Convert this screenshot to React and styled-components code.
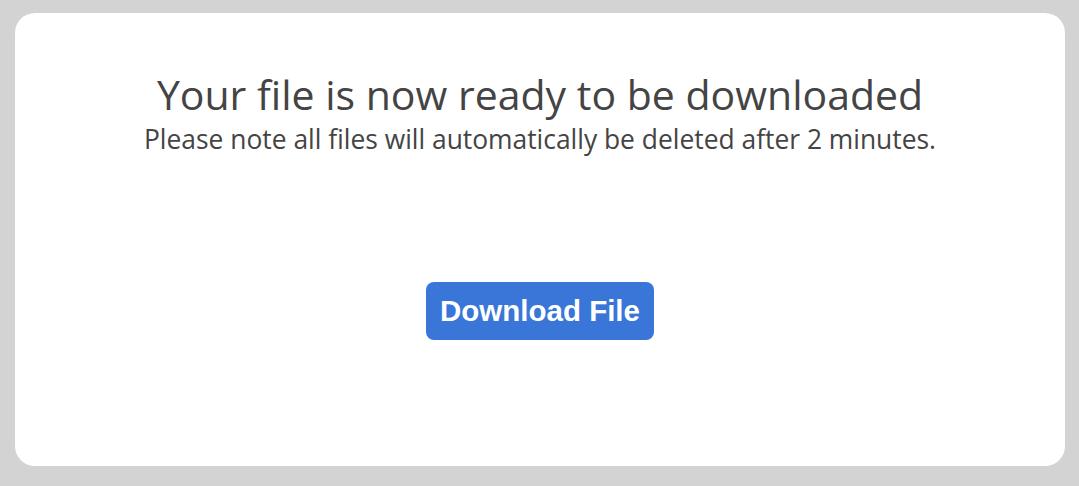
import styled, { createGlobalStyle } from 'styled-components';

const GlobalStyle = createGlobalStyle`
  html, body {
    margin: 0;
    padding: 0;
    background: #d3d3d3;
  }
`;

const Page = styled.div`
  box-sizing: border-box;
  width: 1079px;
  height: 486px;
  padding: 13px 14px 20px 15px;
  background: #d3d3d3;
`;

const Card = styled.main`
  box-sizing: border-box;
  height: 100%;
  background: #fff;
  border-radius: 20px;
  display: flex;
  flex-direction: column;
  align-items: center;
  padding-top: 54px;
  font-family: 'Open Sans', sans-serif;
  color: #444;
`;

const Title = styled.h1`
  margin: 0;
  font-size: 41px;
  font-weight: 400;
  line-height: 54px;
`;

const Note = styled.p`
  margin: 0;
  font-size: 26.4px;
  line-height: 36px;
`;

const DownloadButton = styled.button`
  margin-top: 125px;
  width: 228px;
  height: 58px;
  padding: 0;
  border: none;
  border-radius: 8px;
  background: #3a76d8;
  color: #fff;
  font-family: 'Liberation Sans', Arial, sans-serif;
  font-size: 29.5px;
  font-weight: 700;
  cursor: pointer;
`;

export default function App() {
  return (
    <>
      <GlobalStyle />
      <Page>
        <Card>
          <Title>Your file is now ready to be downloaded</Title>
          <Note>Please note all files will automatically be deleted after 2 minutes.</Note>
          <DownloadButton>Download File</DownloadButton>
        </Card>
      </Page>
    </>
  );
}
